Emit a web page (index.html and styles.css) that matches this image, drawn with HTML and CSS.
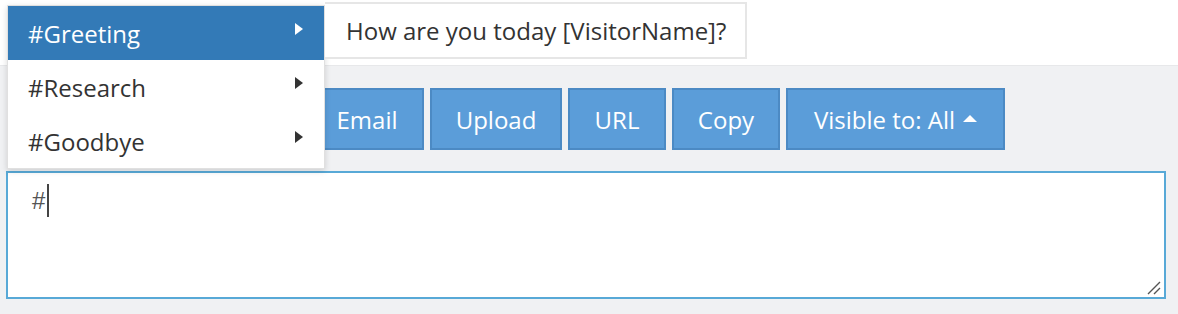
FILE: index.html
```html
<!DOCTYPE html>
<html>
<head>
<meta charset="utf-8">
<link rel="stylesheet" href="styles.css">
</head>
<body>
<div class="page">
  <header class="top"></header>
  <section class="composer">
    <div class="toolbar">
      <button class="btn btn-email">Email</button>
      <button class="btn btn-wide">Upload</button>
      <button class="btn">URL</button>
      <button class="btn btn-copy">Copy</button>
      <button class="btn btn-vis">Visible to: All <span class="tri-up"></span></button>
    </div>
    <div class="editor">
      <span class="typed">#</span><span class="caret"></span>
      <svg class="grip" width="14" height="14" viewBox="0 0 14 14"><path d="M1 13 L13 1 M7 13 L13 7" stroke="#555" stroke-width="1.4" fill="none"/></svg>
    </div>
  </section>

  <ul class="menu">
    <li class="item active">#Greeting<span class="tri-right"></span></li>
    <li class="item">#Research<span class="tri-right"></span></li>
    <li class="item">#Goodbye<span class="tri-right"></span></li>
  </ul>
  <div class="preview">How are you today [VisitorName]?</div>
</div>
</body>
</html>
```

FILE: styles.css
```css
html, body {
  margin: 0;
  padding: 0;
  background: #f0f1f3;
}
.page {
  position: relative;
  width: 1178px;
  height: 314px;
  overflow: hidden;
  font-family: "Open Sans", "Noto Sans", sans-serif;
  color: #333;
}
.top {
  height: 65px;
  background: #fff;
  border-bottom: 1px solid #e7e8ea;
}
.composer {
  padding: 22px 12px 0 6px;
}
.toolbar {
  display: flex;
  gap: 6px;
  margin-left: 304px;
}
.btn {
  height: 62px;
  box-sizing: border-box;
  padding: 0;
  width: 98px;
  background: #5b9dd9;
  border: 2px solid #4c8ac4;
  color: #fff;
  font-family: inherit;
  font-size: 24px;
  display: flex;
  align-items: center;
  justify-content: center;
  gap: 8px;
}
.btn-email { width: 114px; }
.btn-wide { width: 132px; }
.btn-copy { width: 108px; }
.btn-vis { width: 219px; }
.tri-up {
  width: 0;
  height: 0;
  border-left: 7px solid transparent;
  border-right: 7px solid transparent;
  border-bottom: 7px solid #fff;
  margin-top: -2px;
}
.editor {
  position: relative;
  margin-top: 21px;
  height: 128px;
  box-sizing: border-box;
  background: #fff;
  border: 2px solid #58a9d7;
  padding: 11px 0 0 24px;
  display: flex;
  align-items: flex-start;
}
.typed {
  font-family: "Liberation Sans", Arial, sans-serif;
  font-size: 24px;
  color: #555;
  line-height: 34px;
}
.caret {
  width: 2px;
  height: 33px;
  background: #444;
  margin-left: 2px;
}
.grip {
  position: absolute;
  right: 3px;
  bottom: 2px;
}
.menu {
  position: absolute;
  left: 7px;
  top: 5px;
  width: 316px;
  margin: 0;
  padding: 0;
  list-style: none;
  background: #fff;
  border: 1px solid rgba(0,0,0,0.12);
  box-shadow: 0 2px 6px rgba(0,0,0,0.15);
}
.item {
  height: 54px;
  display: flex;
  align-items: center;
  justify-content: space-between;
  padding: 0 21px 0 20px;
  font-size: 24px;
  color: #333;
}
.item.active {
  background: #337ab7;
  color: #fff;
}
.tri-right {
  width: 0;
  height: 0;
  border-top: 6px solid transparent;
  border-bottom: 6px solid transparent;
  border-left: 8px solid #333;
  align-self: flex-start;
  margin-top: 17px;
}
.item.active .tri-right { border-left-color: #fff; }
.preview {
  position: absolute;
  left: 325px;
  top: 2px;
  width: 422px;
  height: 57px;
  box-sizing: border-box;
  background: #fff;
  border: 2px solid #e6e6e6;
  border-left: none;
  padding-left: 21px;
  display: flex;
  align-items: center;
  font-size: 24px;
  color: #333;
}
```
